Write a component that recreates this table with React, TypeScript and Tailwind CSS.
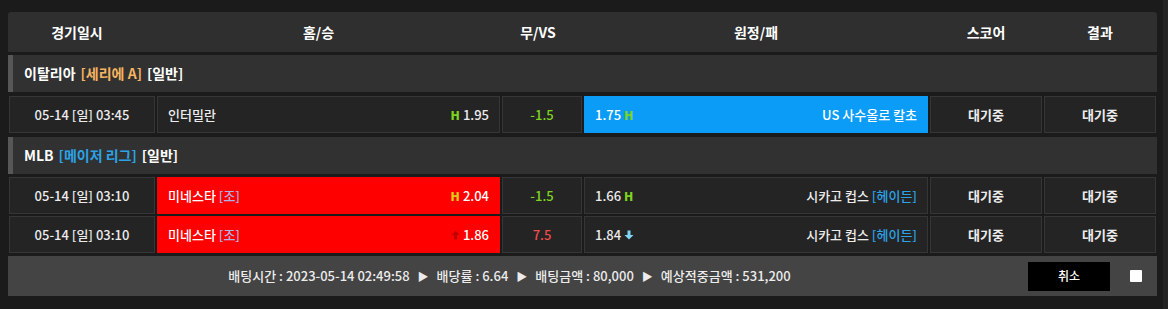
import React from "react";

const FONT = { fontFamily: '"Noto Sans CJK KR", "Noto Sans", sans-serif' };

const W = {
  date: "w-[146px]",
  home: "w-[343px]",
  vs: "w-[80px]",
  away: "w-[344px]",
  score: "w-[112px]",
  result: "w-[112px]",
};

function UpArrow() {
  return (
    <svg width="9" height="10" viewBox="0 0 9 10" className="inline-block mr-[3px]">
      <path d="M4.5 0.5 L8.5 5 L6 5 L6 9.5 L3 9.5 L3 5 L0.5 5 Z" fill="#c20000" />
    </svg>
  );
}

function DownArrow() {
  return (
    <svg width="10" height="10" viewBox="0 0 10 10" className="inline-block ml-[3px]">
      <path d="M3.5 0.5 L6.5 0.5 L6.5 5 L9.5 5 L5 9.5 L0.5 5 L3.5 5 Z" fill="#7fd6f2" />
    </svg>
  );
}

function H({ color = "#7ed321" }: { color?: string }) {
  return (
    <span className="font-black text-[12px]" style={{ color }}>
      H
    </span>
  );
}

function Cell({
  w,
  className = "",
  children,
}: {
  w: string;
  className?: string;
  children?: React.ReactNode;
}) {
  return (
    <div
      className={`${w} h-full flex items-center border border-[#363636] bg-[#242424] text-[13px] font-medium text-[#ececec] ${className}`}
    >
      {children}
    </div>
  );
}

function League({ name, sub, subColor }: { name: string; sub: string; subColor: string }) {
  return (
    <div className="h-[37px] flex items-center bg-[#313131] border-l-[5px] border-[#575757] pl-[11px] text-[14px] font-bold text-white">
      <span>{name}</span>
      <span className="ml-[5px]" style={{ color: subColor }}>
        [{sub}]
      </span>
      <span className="ml-[5px]">[일반]</span>
    </div>
  );
}

function Row({ children }: { children: React.ReactNode }) {
  return <div className="h-[37px] flex gap-[2px] pl-[1px]">{children}</div>;
}

export default function App() {
  return (
    <div className="w-[1168px] h-[309px] bg-[#1b1b1b] relative overflow-hidden" style={FONT}>
      <div className="absolute right-0 top-0 w-[5px] h-full bg-[#242424]" />
      <div className="ml-[8px] pt-[12px] w-[1149px] flex flex-col">
        {/* Header */}
        <div className="h-[40px] flex bg-[#2f2f2f] rounded-t-[3px] text-[14px] font-bold text-white gap-[2px] pl-[1px]">
          <div className={`${W.date} flex items-center justify-center pr-[10px]`}>경기일시</div>
          <div className={`${W.home} flex items-center justify-center pr-[20px]`}>홈/승</div>
          <div className={`${W.vs} flex items-center justify-center pr-[8px]`}>무/VS</div>
          <div className={`${W.away} flex items-center justify-center`}>원정/패</div>
          <div className={`${W.score} flex items-center justify-center`}>스코어</div>
          <div className={`${W.result} flex items-center justify-center`}>결과</div>
        </div>

        <div className="h-[3px]" />
        <League name="이탈리아" sub="세리에 A" subColor="#f7b360" />
        <div className="h-[4px]" />
        <Row>
          <Cell w={W.date} className="justify-center">05-14 [일] 03:45</Cell>
          <Cell w={W.home} className="justify-between px-[10px]">
            <span>인터밀란</span>
            <span className="flex items-center gap-[3px]">
              <H />
              <span>1.95</span>
            </span>
          </Cell>
          <Cell w={W.vs} className="justify-center">
            <span className="text-[#7ed321]">-1.5</span>
          </Cell>
          <Cell w={W.away} className="justify-between px-[10px] !bg-[#0a9cf6] !border-[#0a9cf6] border-t-[#3db4ff] text-white">
            <span className="flex items-center gap-[3px]">
              <span>1.75</span>
              <H />
            </span>
            <span>US 사수올로 칼초</span>
          </Cell>
          <Cell w={W.score} className="justify-center !font-bold">대기중</Cell>
          <Cell w={W.result} className="justify-center !font-bold">대기중</Cell>
        </Row>

        <div className="h-[4px]" />
        <League name="MLB" sub="메이저 리그" subColor="#2ba3e6" />
        <div className="h-[3px]" />
        <Row>
          <Cell w={W.date} className="justify-center">05-14 [일] 03:10</Cell>
          <Cell w={W.home} className="justify-between px-[10px] !bg-[#ff0000] !border-[#ff0000] border-t-[#ff6a6a] text-white">
            <span>
              미네스타 <span className="text-[#a9b4e8]">[조]</span>
            </span>
            <span className="flex items-center gap-[3px]">
              <H color="#d8cc18" />
              <span>2.04</span>
            </span>
          </Cell>
          <Cell w={W.vs} className="justify-center">
            <span className="text-[#7ed321]">-1.5</span>
          </Cell>
          <Cell w={W.away} className="justify-between px-[10px]">
            <span className="flex items-center gap-[3px]">
              <span>1.66</span>
              <H />
            </span>
            <span>
              시카고 컵스 <span className="text-[#2ba3e6]">[헤이든]</span>
            </span>
          </Cell>
          <Cell w={W.score} className="justify-center !font-bold">대기중</Cell>
          <Cell w={W.result} className="justify-center !font-bold">대기중</Cell>
        </Row>
        <div className="h-[2px]" />
        <Row>
          <Cell w={W.date} className="justify-center">05-14 [일] 03:10</Cell>
          <Cell w={W.home} className="justify-between px-[10px] !bg-[#ff0000] !border-[#ff0000] text-white">
            <span>
              미네스타 <span className="text-[#a9b4e8]">[조]</span>
            </span>
            <span className="flex items-center">
              <UpArrow />
              <span>1.86</span>
            </span>
          </Cell>
          <Cell w={W.vs} className="justify-center">
            <span className="text-[#f04c4c]">7.5</span>
          </Cell>
          <Cell w={W.away} className="justify-between px-[10px]">
            <span className="flex items-center">
              <span>1.84</span>
              <DownArrow />
            </span>
            <span>
              시카고 컵스 <span className="text-[#2ba3e6]">[헤이든]</span>
            </span>
          </Cell>
          <Cell w={W.score} className="justify-center !font-bold">대기중</Cell>
          <Cell w={W.result} className="justify-center !font-bold">대기중</Cell>
        </Row>

        <div className="h-[3px]" />
        {/* Footer */}
        <div className="h-[40px] bg-[#444444] flex items-center text-[13px] font-medium text-[#ececec] pr-[15px]">
          <div className="flex-1 flex items-center justify-center gap-[8px] pr-[17px]">
            <span>배팅시간 : 2023-05-14 02:49:58</span>
            <span className="text-[11px]">▶</span>
            <span>배당률 : 6.64</span>
            <span className="text-[11px]">▶</span>
            <span>배팅금액 : 80,000</span>
            <span className="text-[11px]">▶</span>
            <span>예상적중금액 : 531,200</span>
          </div>
          <div className="w-[82px] h-[29px] bg-black flex items-center justify-center text-white text-[12px]">
            취소
          </div>
          <div className="ml-[20px] w-[12px] h-[12px] bg-white rounded-[1px]" />
        </div>
      </div>
    </div>
  );
}
